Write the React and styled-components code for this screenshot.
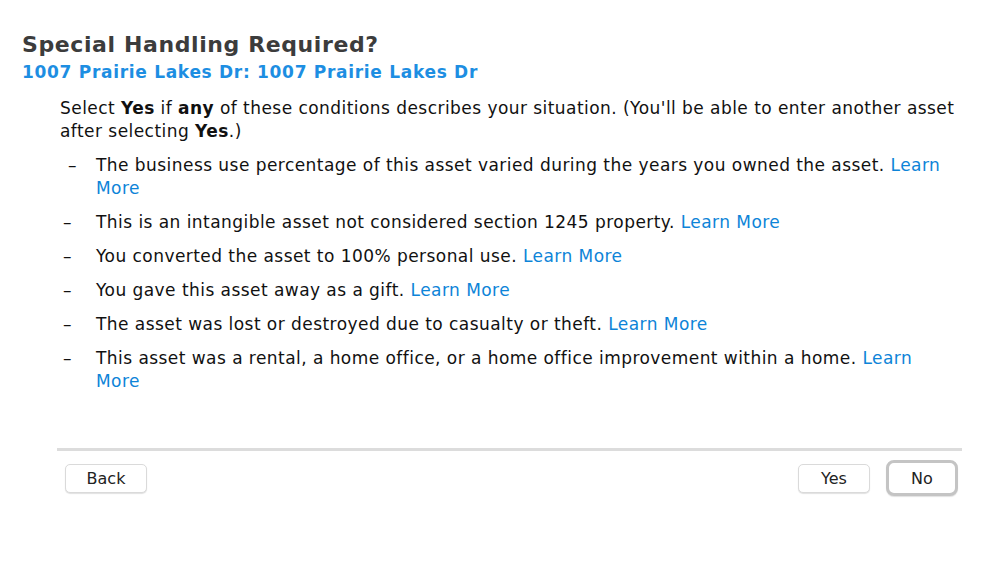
import React from "react";
import styled, { createGlobalStyle } from "styled-components";

const Global = createGlobalStyle`
  html, body { margin: 0; padding: 0; background: #fff; }
  body { font-family: "DejaVu Sans", Verdana, sans-serif; color: #111; }
`;

const Page = styled.div`
  width: 999px;
  height: 570px;
  box-sizing: border-box;
  padding: 31px 0 0 22px;
`;

const Title = styled.h1`
  margin: 0;
  font-size: 22px;
  letter-spacing: 0.6px;
  line-height: 28px;
  font-weight: bold;
  color: #3c3c3c;
`;

const Subtitle = styled.h2`
  margin: 0;
  font-size: 17px;
  letter-spacing: 0.7px;
  line-height: 26px;
  font-weight: bold;
  color: #1d8ee2;
`;

const Body = styled.div`
  margin: 12px 0 0 38px;
  width: 904px;
  font-size: 17px;
  letter-spacing: 0.45px;
  line-height: 23px;
`;

const Para = styled.p`
  margin: 0;
`;

const List = styled.ul`
  list-style: none;
  margin: 11px 0 0;
  padding: 0;
  display: flex;
  flex-direction: column;
  gap: 11px;
`;

const Item = styled.li`
  display: grid;
  grid-template-columns: 33px 1fr;
  padding-left: 3px;
  width: 880px;
`;

const Dash = styled.span`
  padding-left: ${(p) => (p.$shift ? "5px" : "0")};
`;

const Link = styled.a`
  color: #0d84d8;
  text-decoration: none;
`;

const Rule = styled.div`
  margin: 55px 0 0 35px;
  width: 905px;
  height: 3px;
  background: #dcdcdc;
`;

const Footer = styled.div`
  display: flex;
  align-items: center;
  margin: 9px 0 0 43px;
  width: 893px;
`;

const Spacer = styled.div`
  flex: 1;
`;

const Button = styled.button`
  font-family: "DejaVu Sans", Verdana, sans-serif;
  font-size: 16px;
  color: #222;
  background: #fff;
  height: ${(p) => (p.$focus ? "36px" : "29px")};
  min-width: ${(p) => p.$w}px;
  box-sizing: border-box;
  border-radius: ${(p) => (p.$focus ? "8px" : "5px")};
  border: ${(p) => (p.$focus ? "3px solid #c4c4c4" : "1px solid #dadada")};
  box-shadow: 0 1px 1px rgba(0, 0, 0, 0.12);
  padding: 0;
  margin-left: ${(p) => p.$ml || 0}px;
`;

const items = [
  { text: "The business use percentage of this asset varied during the years you owned the asset.", shift: true },
  { text: "This is an intangible asset not considered section 1245 property." },
  { text: "You converted the asset to 100% personal use." },
  { text: "You gave this asset away as a gift." },
  { text: "The asset was lost or destroyed due to casualty or theft." },
  { text: "This asset was a rental, a home office, or a home office improvement within a home." },
];

export default function App() {
  return (
    <Page>
      <Global />
      <Title>Special Handling Required?</Title>
      <Subtitle>1007 Prairie Lakes Dr: 1007 Prairie Lakes Dr</Subtitle>
      <Body>
        <Para>
          Select <b>Yes</b> if <b>any</b> of these conditions describes your situation. (You'll be able to enter another asset after selecting <b>Yes</b>.)
        </Para>
        <List>
          {items.map((it, i) => (
            <Item key={i}>
              <Dash $shift={it.shift}>–</Dash>
              <span>
                {it.text} <Link href="#">Learn More</Link>
              </span>
            </Item>
          ))}
        </List>
      </Body>
      <Rule />
      <Footer>
        <Button $w={82}>Back</Button>
        <Spacer />
        <Button $w={72}>Yes</Button>
        <Button $w={72} $focus $ml={16}>No</Button>
      </Footer>
    </Page>
  );
}
